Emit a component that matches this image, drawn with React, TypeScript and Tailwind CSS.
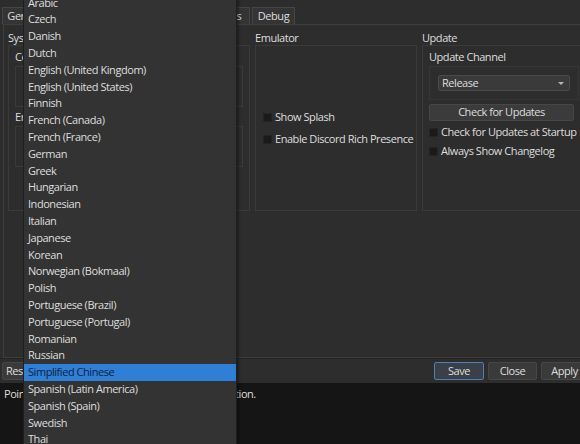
import React from "react";

const languages = [
  "Arabic",
  "Czech",
  "Danish",
  "Dutch",
  "English (United Kingdom)",
  "English (United States)",
  "Finnish",
  "French (Canada)",
  "French (France)",
  "German",
  "Greek",
  "Hungarian",
  "Indonesian",
  "Italian",
  "Japanese",
  "Korean",
  "Norwegian (Bokmaal)",
  "Polish",
  "Portuguese (Brazil)",
  "Portuguese (Portugal)",
  "Romanian",
  "Russian",
  "Simplified Chinese",
  "Spanish (Latin America)",
  "Spanish (Spain)",
  "Swedish",
  "Thai",
  "Traditional Chinese",
];

function Check({ label }: { label: string }) {
  return (
    <div className="flex h-[16px] items-center gap-[3px] whitespace-nowrap">
      <span className="h-[9px] w-[9px] shrink-0 border border-[#242424] bg-[#1a1a1a]" />
      <span>{label}</span>
    </div>
  );
}

function Tab({ label, w }: { label: string; w: string }) {
  return (
    <div
      className={`flex h-[17px] shrink-0 items-center justify-center border border-b-0 border-[#454545] bg-[#343434] px-[4px] ${w}`}
    >
      {label}
    </div>
  );
}

export default function App() {
  return (
    <div
      className="relative flex h-[444px] w-[580px] flex-col overflow-hidden whitespace-nowrap bg-[#2d2d2d] text-[11px] tracking-[-0.45px] text-[#dedede]"
      style={{ fontFamily: '"Open Sans", "Noto Sans", sans-serif' }}
    >
      {/* tabs */}
      <div className="flex gap-[2px] pl-[2px] pt-[7px]">
        <Tab label="General" w="w-[48px]" />
        <Tab label="Graphics" w="w-[60px]" />
        <Tab label="Audio" w="w-[44px]" />
        <Tab label="Input" w="w-[44px]" />
        <Tab label="Paths" w="w-[44px]" />
        <Tab label="Debug" w="w-[43px]" />
      </div>

      {/* tab pane */}
      <div className="ml-[3px] h-[334px] overflow-hidden border border-r-0 border-[#3e3e3e] px-[4px] pt-[6px]">
        <div className="flex gap-[5px]">
          <div className="flex w-[242px] shrink-0 flex-col">
            <div className="h-[14px] leading-[14px]">System</div>
            <div className="h-[166px] border border-[#3a3a3a] px-[6px] pt-[1px]">
              <div className="h-[19px] leading-[19px]">Console Language</div>
              <div className="h-[41px] border border-[#3a3a3a]" />
              <div className="h-[18px] pt-[2px] leading-[16px]">Emulated Region</div>
              <div className="mt-[1px] h-[41px] border border-[#3a3a3a]" />
            </div>
          </div>

          <div className="flex w-[162px] shrink-0 flex-col">
            <div className="h-[14px] leading-[14px]">Emulator</div>
            <div className="flex h-[166px] flex-col justify-center gap-[6px] border border-[#3a3a3a] px-[7px] pt-[1px]">
              <Check label="Show Splash" />
              <Check label="Enable Discord Rich Presence" />
            </div>
          </div>

          <div className="flex w-[170px] shrink-0 flex-col">
            <div className="h-[14px] leading-[14px]">Update</div>
            <div className="h-[166px] border border-[#3a3a3a] px-[6px] pt-[1px]">
              <div className="h-[19px] leading-[19px]">Update Channel</div>
              <div className="w-[150px] border border-[#363636] px-[8px] py-[8px]">
                <div className="flex h-[16px] items-center justify-between rounded-[2px] border border-[#4a4a4a] bg-[#3a3a3a] pl-[3px] pr-[5px]">
                  <span>Release</span>
                  <span className="h-0 w-0 border-x-[3px] border-t-[3px] border-x-transparent border-t-[#b5b5b5]" />
                </div>
              </div>
              <div className="mt-[4px] flex h-[17px] w-[145px] items-center justify-center rounded-[2px] border border-[#474747] bg-[#3b3b3b]">
                Check for Updates
              </div>
              <div className="mt-[3px] flex flex-col gap-[3px]">
                <Check label="Check for Updates at Startup" />
                <Check label="Always Show Changelog" />
              </div>
            </div>
          </div>
        </div>
      </div>

      {/* bottom buttons */}
      <div className="flex h-[25px] items-center justify-between border-t border-[#232323] pl-[2px]">
        <div className="flex h-[18px] items-center rounded-[2px] border border-[#474747] bg-[#3a3a3a] px-[3px]">
          Restore Defaults
        </div>
        <div className="flex gap-[4px]">
          <div className="flex h-[18px] w-[50px] items-center justify-center rounded-[2px] border border-[#4f7fb3] bg-[#3b4048]">
            Save
          </div>
          <div className="flex h-[18px] w-[49px] items-center justify-center rounded-[2px] border border-[#474747] bg-[#3a3a3a]">
            Close
          </div>
          <div className="-mr-[8px] flex h-[18px] w-[47px] items-center justify-center rounded-[2px] border border-[#474747] bg-[#3a3a3a]">
            Apply
          </div>
        </div>
      </div>

      {/* description console */}
      <div className="flex-1 bg-[#151515] px-[4px] pt-[3px]">
        Point at any setting to see a description of that option.
      </div>

      {/* open language popup */}
      <div className="absolute left-[23px] top-0 h-[444px] w-[214px] overflow-hidden border-x border-[#1f1f1f] bg-[#333333] shadow-[2px_0_2px_rgba(0,0,0,0.35)]">
        <div className="-mt-[5.4px]">
          {languages.map((lang) => (
            <div
              key={lang}
              className={`h-[16.8px] pl-[4px] leading-[16.8px] ${
                lang === "Simplified Chinese" ? "bg-[#2f7fd6] text-[#10213a]" : ""
              }`}
            >
              {lang}
            </div>
          ))}
        </div>
      </div>
    </div>
  );
}
